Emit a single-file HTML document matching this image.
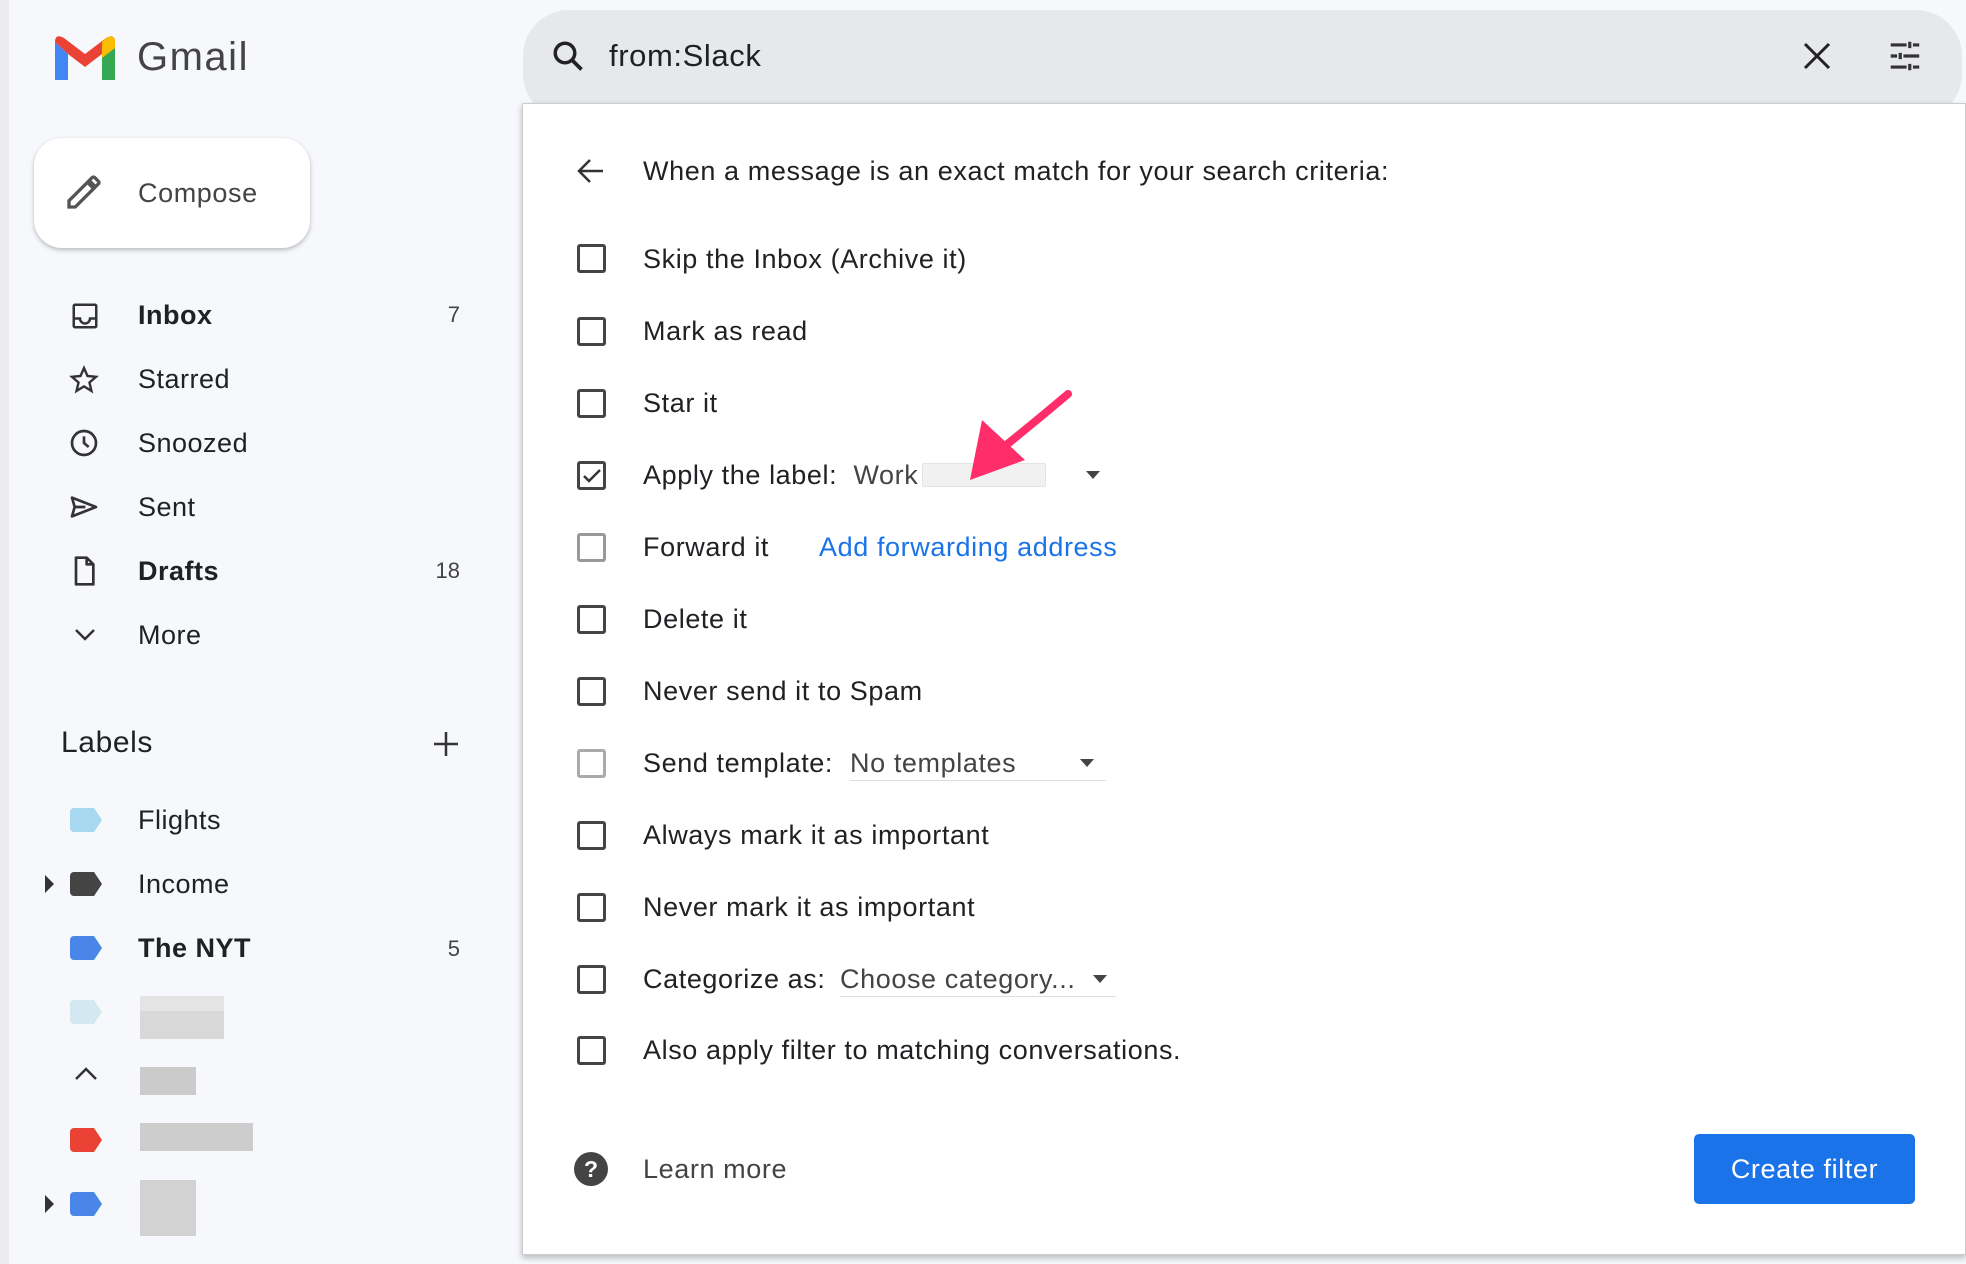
<!DOCTYPE html>
<html><head><meta charset="utf-8"><style>
*{margin:0;padding:0;box-sizing:border-box}
body{width:1966px;height:1264px;overflow:hidden;background:#f6f8fc;font-family:"Liberation Sans",Arial,sans-serif;color:#202124;position:relative}
.a{position:absolute}
.t{position:absolute;font-size:27px;line-height:32px;white-space:nowrap;letter-spacing:.6px}
.cb{position:absolute;left:577px;width:29px;height:29px;border:3px solid #444;border-radius:3px}
.nav{position:absolute;left:138px;font-size:27px;line-height:32px;color:#202124;letter-spacing:.5px}
.cnt{position:absolute;right:1506px;font-size:22px;color:#444}
.blk{position:absolute;background:#d8d8d8}
</style></head><body>
<div class="a" style="left:0;top:0;width:9px;height:1264px;background:#ececee"></div>
<svg class="a" style="left:55px;top:36px" width="60" height="44" viewBox="0 0 60 44">
<path d="M0 6 L0 44 L13 44 L13 18 Z" fill="#4285f4"/>
<path d="M47 18 L47 44 L60 44 L60 6 Z" fill="#34a853"/>
<path d="M0 6 Q0 -3 9 2 L30 18 L51 2 Q60 -3 60 6 L47 18 L30 31 L13 18 Z" fill="#ea4335"/>
<path d="M47 6 L51 2 Q60 -3 60 6 L60 12 L47 22 Z" fill="#fbbc04"/>
</svg>
<div class="t" style="left:137px;top:34px;font-size:40px;line-height:46px;color:#444;letter-spacing:1.5px">Gmail</div>
<div class="a" style="left:34px;top:138px;width:276px;height:110px;background:#fff;border-radius:28px;box-shadow:0 2px 5px rgba(0,0,0,.25)"></div>
<svg class="a" style="left:64px;top:172px" width="40" height="40" viewBox="0 0 24 24"><path d="M3 17.25V21h3.75L17.81 9.94l-3.75-3.75L3 17.25zM20.71 7.04a1 1 0 000-1.41l-2.34-2.34a1 1 0 00-1.41 0l-1.83 1.83 3.75 3.75 1.83-1.83z" fill="none" stroke="#555" stroke-width="2"/></svg>
<div class="t" style="left:138px;top:177px;color:#444">Compose</div>
<svg class="a" style="left:70px;top:301px" width="30" height="30" viewBox="0 0 24 24"><path d="M4 3h16a1 1 0 011 1v16a1 1 0 01-1 1H4a1 1 0 01-1-1V4a1 1 0 011-1zM3 14h5a4 4 0 008 0h5" fill="none" stroke="#333" stroke-width="2"/></svg>
<div class="nav" style="top:299px;font-weight:bold">Inbox</div><div class="cnt" style="top:302px">7</div>
<svg class="a" style="left:68px;top:364px" width="32" height="32" viewBox="0 0 24 24"><path d="M12 3l2.6 6 6.4.6-4.9 4.3 1.5 6.3L12 16.8 6.4 20.2l1.5-6.3L3 9.6l6.4-.6z" fill="none" stroke="#333" stroke-width="1.8"/></svg>
<div class="nav" style="top:363px">Starred</div>
<svg class="a" style="left:68px;top:427px" width="32" height="32" viewBox="0 0 24 24"><circle cx="12" cy="12" r="9" fill="none" stroke="#333" stroke-width="2"/><path d="M12 7v5l3.5 3" fill="none" stroke="#333" stroke-width="2"/></svg>
<div class="nav" style="top:427px">Snoozed</div>
<svg class="a" style="left:68px;top:491px" width="32" height="32" viewBox="0 0 24 24"><path d="M3 5l18 7-18 7 2-7z M5 12h8" fill="none" stroke="#333" stroke-width="2" stroke-linejoin="round"/></svg>
<div class="nav" style="top:491px">Sent</div>
<svg class="a" style="left:68px;top:555px" width="32" height="32" viewBox="0 0 24 24"><path d="M6 2h8l5 5v15H6z M14 2v5h5" fill="none" stroke="#333" stroke-width="2" stroke-linejoin="round"/></svg>
<div class="nav" style="top:555px;font-weight:bold">Drafts</div><div class="cnt" style="top:558px">18</div>
<svg class="a" style="left:72px;top:624px" width="26" height="20" viewBox="0 0 26 20"><path d="M4 6l9 9 9-9" fill="none" stroke="#333" stroke-width="2.5"/></svg>
<div class="nav" style="top:619px">More</div>
<div class="t" style="left:61px;top:726px;font-size:30px;line-height:34px">Labels</div>
<svg class="a" style="left:432px;top:730px" width="28" height="28" viewBox="0 0 28 28"><path d="M14 2v24M2 14h24" stroke="#333" stroke-width="2.5"/></svg>
<svg class="a" style="left:70px;top:808px" width="32" height="24"><path d="M4 0h20l8 12-8 12H4a4 4 0 01-4-4V4a4 4 0 014-4z" fill="#a8d8f0"/></svg>
<div class="nav" style="top:804px">Flights</div>
<svg class="a" style="left:45px;top:875px" width="10" height="18"><path d="M0 0l9 9-9 9z" fill="#333"/></svg>
<svg class="a" style="left:70px;top:872px" width="32" height="24"><path d="M4 0h20l8 12-8 12H4a4 4 0 01-4-4V4a4 4 0 014-4z" fill="#444"/></svg>
<div class="nav" style="top:868px">Income</div>
<svg class="a" style="left:70px;top:936px" width="32" height="24"><path d="M4 0h20l8 12-8 12H4a4 4 0 01-4-4V4a4 4 0 014-4z" fill="#4a86e8"/></svg>
<div class="nav" style="top:932px;font-weight:bold">The NYT</div><div class="cnt" style="top:936px">5</div>
<svg class="a" style="left:70px;top:1000px" width="32" height="24"><path d="M4 0h20l8 12-8 12H4a4 4 0 01-4-4V4a4 4 0 014-4z" fill="#d4e8f2"/></svg>
<div class="blk" style="left:140px;top:1011px;width:84px;height:28px"></div><div class="blk" style="left:140px;top:996px;width:84px;height:15px;background:#e4e4e4"></div>
<svg class="a" style="left:74px;top:1066px" width="24" height="16"><path d="M2 13l10-10 10 10" fill="none" stroke="#333" stroke-width="2.5"/></svg>
<div class="blk" style="left:140px;top:1067px;width:56px;height:28px;background:#cbcbcb"></div>
<svg class="a" style="left:70px;top:1128px" width="32" height="24"><path d="M4 0h20l8 12-8 12H4a4 4 0 01-4-4V4a4 4 0 014-4z" fill="#ea4335"/></svg>
<div class="blk" style="left:140px;top:1123px;width:113px;height:28px;background:#cdcdcd"></div>
<svg class="a" style="left:45px;top:1195px" width="10" height="18"><path d="M0 0l9 9-9 9z" fill="#333"/></svg>
<svg class="a" style="left:70px;top:1192px" width="32" height="24"><path d="M4 0h20l8 12-8 12H4a4 4 0 01-4-4V4a4 4 0 014-4z" fill="#4a86e8"/></svg>
<div class="blk" style="left:140px;top:1180px;width:56px;height:56px;background:#d2d2d2"></div>
<div class="a" style="left:523px;top:10px;width:1439px;height:110px;background:#e6e8eb;border-radius:46px"></div>
<svg class="a" style="left:550px;top:38px" width="36" height="36" viewBox="0 0 24 24"><circle cx="10" cy="10" r="6.5" fill="none" stroke="#222" stroke-width="2.3"/><path d="M15 15l6 6" stroke="#222" stroke-width="2.5"/></svg>
<div class="t" style="left:609px;top:38px;font-size:31px;line-height:36px">from:Slack</div>
<svg class="a" style="left:1802px;top:41px" width="30" height="30" viewBox="0 0 30 30"><path d="M3 3l24 24M27 3L3 27" stroke="#222" stroke-width="3"/></svg>
<svg class="a" style="left:1886px;top:37px" width="38" height="38" viewBox="0 0 24 24"><path d="M3 5h10M17 5h4M15 3v4M3 12h4M11 12h10M9 10v4M3 19h10M17 19h4M15 17v4" stroke="#333" stroke-width="2"/></svg>
<div class="a" style="left:522px;top:103px;width:1444px;height:1152px;background:#fff;border:1px solid #ccc;box-shadow:0 3px 6px rgba(0,0,0,.25)"></div>
<svg class="a" style="left:575px;top:156px" width="32" height="30" viewBox="0 0 32 30"><path d="M28 15H5M15 4L4 15l11 11" fill="none" stroke="#333" stroke-width="2.5"/></svg>
<div class="t" style="left:643px;top:155px">When a message is an exact match for your search criteria:</div>
<div class="cb" style="top:244px"></div><div class="t" style="left:643px;top:243px">Skip the Inbox (Archive it)</div>
<div class="cb" style="top:317px"></div><div class="t" style="left:643px;top:315px">Mark as read</div>
<div class="cb" style="top:389px"></div><div class="t" style="left:643px;top:387px">Star it</div>
<div class="cb" style="top:461px"></div>
<svg class="a" style="left:582px;top:467px" width="20" height="18"><path d="M2 9l5 5L18 3" fill="none" stroke="#333" stroke-width="2.5"/></svg>
<div class="t" style="left:643px;top:459px">Apply the label:&nbsp; <span style="color:#444">Work</span></div>
<div class="a" style="left:922px;top:463px;width:124px;height:24px;background:#f1f1f1;border:1px solid #e4e4e4;border-radius:2px"></div>
<svg class="a" style="left:1086px;top:471px" width="14" height="8"><path d="M0 0h14L7 8z" fill="#444"/></svg>
<div class="cb" style="top:533px;border-color:#999"></div><div class="t" style="left:643px;top:531px">Forward it</div>
<div class="t" style="left:819px;top:531px;color:#1a73e8">Add forwarding address</div>
<div class="cb" style="top:605px"></div><div class="t" style="left:643px;top:603px">Delete it</div>
<div class="cb" style="top:677px"></div><div class="t" style="left:643px;top:675px">Never send it to Spam</div>
<div class="cb" style="top:749px;border-color:#aaa"></div><div class="t" style="left:643px;top:747px">Send template:</div>
<div class="t" style="left:850px;top:747px;color:#444">No templates</div>
<div class="a" style="left:850px;top:780px;width:256px;height:1px;background:#ddd"></div>
<svg class="a" style="left:1080px;top:759px" width="14" height="8"><path d="M0 0h14L7 8z" fill="#444"/></svg>
<div class="cb" style="top:821px"></div><div class="t" style="left:643px;top:819px">Always mark it as important</div>
<div class="cb" style="top:893px"></div><div class="t" style="left:643px;top:891px">Never mark it as important</div>
<div class="cb" style="top:965px"></div><div class="t" style="left:643px;top:963px">Categorize as:</div>
<div class="t" style="left:840px;top:963px;color:#444">Choose category...</div>
<div class="a" style="left:840px;top:996px;width:276px;height:1px;background:#ddd"></div>
<svg class="a" style="left:1093px;top:975px" width="14" height="8"><path d="M0 0h14L7 8z" fill="#444"/></svg>
<div class="cb" style="top:1036px"></div><div class="t" style="left:643px;top:1034px">Also apply filter to matching conversations.</div>
<svg class="a" style="left:574px;top:1152px" width="34" height="34" viewBox="0 0 34 34"><circle cx="17" cy="17" r="17" fill="#444"/><text x="17" y="25" text-anchor="middle" font-family="Liberation Sans" font-weight="bold" font-size="23" fill="#fff">?</text></svg>
<div class="t" style="left:643px;top:1153px;color:#444">Learn more</div>
<div class="a" style="left:1694px;top:1134px;width:221px;height:70px;background:#1a73e8;border-radius:5px;color:#fff;font-size:27px;line-height:70px;text-align:center;letter-spacing:.6px">Create filter</div>
<svg class="a" style="left:960px;top:385px" width="120" height="100" viewBox="960 385 120 100"><path d="M1068 394 Q1035 422 1000 450" stroke="#ff2d6a" stroke-width="8" fill="none" stroke-linecap="round"/><path d="M970 480 L982 420 L1025 460 Z" fill="#ff2d6a"/></svg>
</body></html>
